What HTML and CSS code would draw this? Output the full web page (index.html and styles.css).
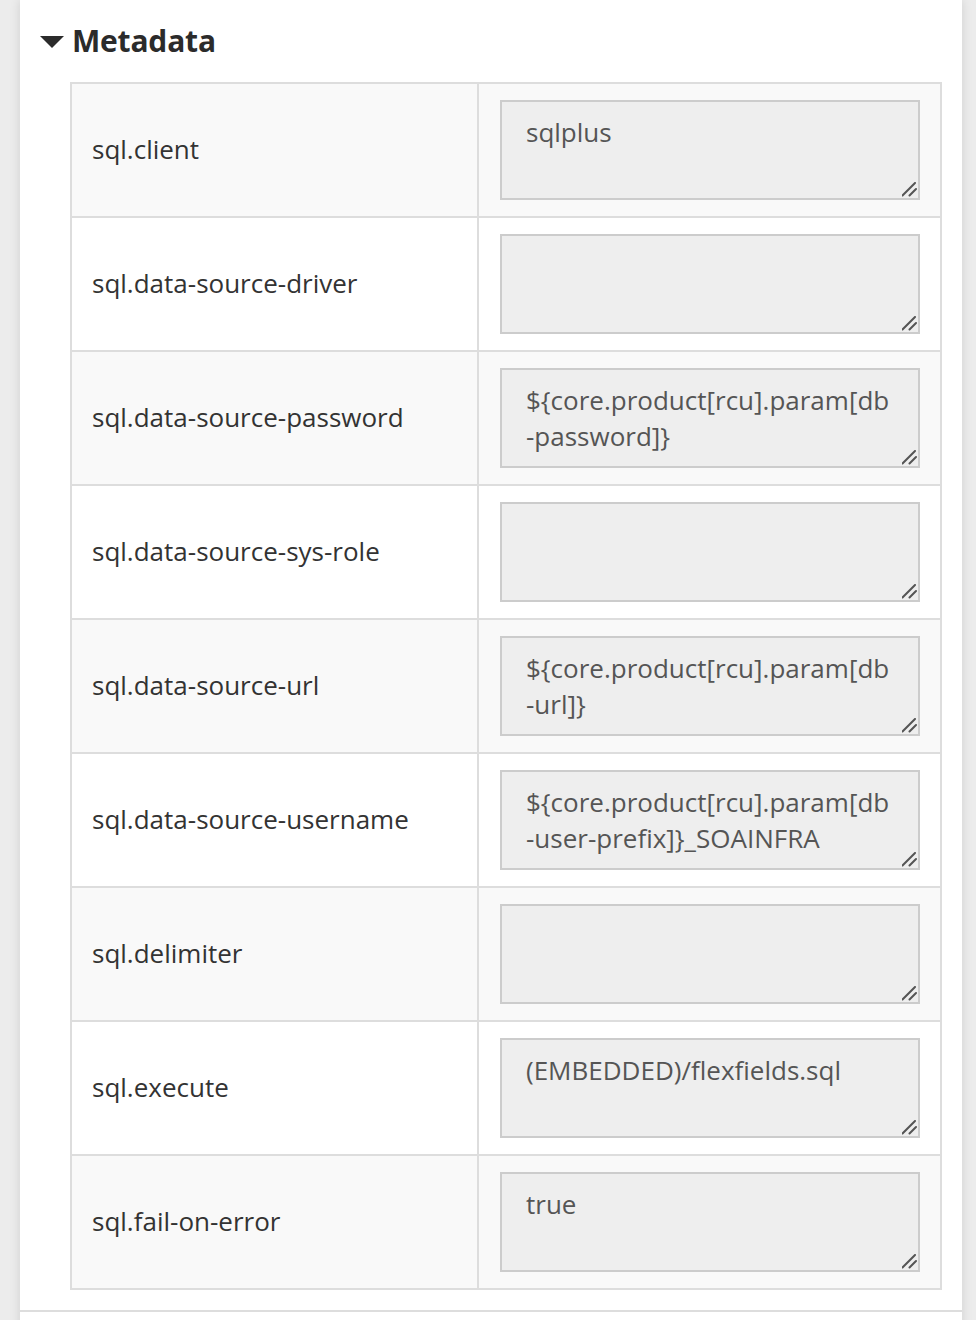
FILE: index.html
```html
<!DOCTYPE html>
<html>
<head>
<meta charset="utf-8">
<link rel="stylesheet" href="styles.css">
</head>
<body>
<div class="page">
  <section class="panel">
    <h2 class="title"><span class="caret"></span>Metadata</h2>
    <div class="props">
      <div class="row odd"><div class="key">sql.client</div><div class="val"><textarea class="box" readonly>sqlplus</textarea><svg class="grip" viewBox="0 0 16 16" width="16" height="16"><path d="M0.5 13.5 L13 1 M7.5 13.5 L14 7"/></svg></div></div>
      <div class="row"><div class="key">sql.data-source-driver</div><div class="val"><textarea class="box" readonly></textarea><svg class="grip" viewBox="0 0 16 16" width="16" height="16"><path d="M0.5 13.5 L13 1 M7.5 13.5 L14 7"/></svg></div></div>
      <div class="row odd"><div class="key">sql.data-source-password</div><div class="val"><textarea class="box" readonly>${core.product[rcu].param[db-password]}</textarea><svg class="grip" viewBox="0 0 16 16" width="16" height="16"><path d="M0.5 13.5 L13 1 M7.5 13.5 L14 7"/></svg></div></div>
      <div class="row"><div class="key">sql.data-source-sys-role</div><div class="val"><textarea class="box" readonly></textarea><svg class="grip" viewBox="0 0 16 16" width="16" height="16"><path d="M0.5 13.5 L13 1 M7.5 13.5 L14 7"/></svg></div></div>
      <div class="row odd"><div class="key">sql.data-source-url</div><div class="val"><textarea class="box" readonly>${core.product[rcu].param[db-url]}</textarea><svg class="grip" viewBox="0 0 16 16" width="16" height="16"><path d="M0.5 13.5 L13 1 M7.5 13.5 L14 7"/></svg></div></div>
      <div class="row"><div class="key">sql.data-source-username</div><div class="val"><textarea class="box" readonly>${core.product[rcu].param[db-user-prefix]}_SOAINFRA</textarea><svg class="grip" viewBox="0 0 16 16" width="16" height="16"><path d="M0.5 13.5 L13 1 M7.5 13.5 L14 7"/></svg></div></div>
      <div class="row odd"><div class="key">sql.delimiter</div><div class="val"><textarea class="box" readonly></textarea><svg class="grip" viewBox="0 0 16 16" width="16" height="16"><path d="M0.5 13.5 L13 1 M7.5 13.5 L14 7"/></svg></div></div>
      <div class="row"><div class="key">sql.execute</div><div class="val"><textarea class="box" readonly>(EMBEDDED)/flexfields.sql</textarea><svg class="grip" viewBox="0 0 16 16" width="16" height="16"><path d="M0.5 13.5 L13 1 M7.5 13.5 L14 7"/></svg></div></div>
      <div class="row odd"><div class="key">sql.fail-on-error</div><div class="val"><textarea class="box" readonly>true</textarea><svg class="grip" viewBox="0 0 16 16" width="16" height="16"><path d="M0.5 13.5 L13 1 M7.5 13.5 L14 7"/></svg></div></div>
    </div>
  </section>
  <section class="panel next"></section>
</div>
</body>
</html>
```
FILE: styles.css
```css
html, body {
  margin: 0;
  padding: 0;
}
body {
  background: #ececec;
  font-family: "Open Sans", "Noto Sans", sans-serif;
  color: #333;
}
.page {
  margin-left: 20px;
  width: 942px;
  min-height: 1320px;
  background: #fff;
  box-shadow: 0 0 10px rgba(0, 0, 0, 0.12);
}
.panel {
  padding: 20px 20px 20px 20px;
}
.panel.next {
  border-top: 2px solid #ddd;
  padding: 0;
  height: 40px;
}
.title {
  display: flex;
  align-items: center;
  margin: 0 0 20px 0;
  height: 42px;
  font-size: 30px;
  line-height: 42px;
  font-weight: 700;
  letter-spacing: -0.2px;
  color: #2b2b2b;
}
.caret {
  width: 0;
  height: 0;
  border-left: 12px solid transparent;
  border-right: 12px solid transparent;
  border-top: 12px solid #2b2b2b;
  margin-right: 8px;
  margin-top: 1px;
}
.props {
  margin-left: 30px;
  width: 872px;
  border: 2px solid #ddd;
  box-sizing: border-box;
}
.row {
  display: grid;
  grid-template-columns: 405px 1fr;
  background: #fff;
  border-bottom: 2px solid #ddd;
}
.row:last-child {
  border-bottom: none;
}
.row.odd {
  background: #f9f9f9;
}
.key {
  display: flex;
  align-items: center;
  padding: 0 20px 2px 20px;
  font-size: 26px;
  line-height: 36px;
  color: #333;
}
.val {
  position: relative;
  border-left: 2px solid #ddd;
  padding: 16px 20px 16px 21px;
}
.box {
  display: block;
  box-sizing: border-box;
  width: 420px;
  height: 100px;
  margin: 0;
  padding: 12px 24px;
  border: 2px solid #ccc;
  border-radius: 0;
  background: #eee;
  color: #555;
  font-family: "Open Sans", "Noto Sans", sans-serif;
  font-size: 26px;
  line-height: 36px;
  overflow: hidden;
  overflow-wrap: anywhere;
  word-break: break-all;
  resize: none;
  outline: none;
}
.grip {
  position: absolute;
  right: 22px;
  bottom: 18px;
  fill: none;
  stroke: #555;
  stroke-width: 2;
  stroke-linecap: round;
  pointer-events: none;
}
```
